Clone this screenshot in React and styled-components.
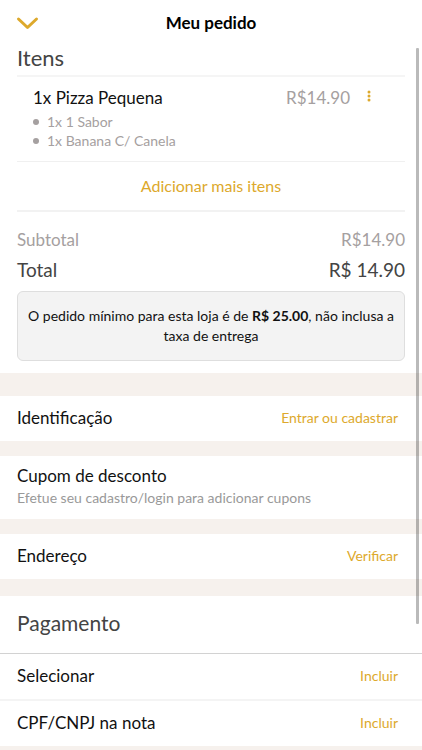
import styled, { createGlobalStyle } from "styled-components";

const GlobalStyle = createGlobalStyle`
  * {
    box-sizing: border-box;
  }

  body {
    margin: 0;
    background-color: #f6f1ed;
    font-family: Lato, "Open Sans", sans-serif;
    color: #111;
  }

  h1, h2, h3, p, ul, dl, dd {
    margin: 0;
    padding: 0;
  }

  button {
    padding: 0;
    border: none;
    background: none;
    font-family: inherit;
    cursor: pointer;
  }
`;

const Page = styled.div`
  position: relative;
  display: flex;
  flex-direction: column;
  min-height: 100vh;
`;

const Header = styled.header`
  display: grid;
  grid-template-columns: 24px 1fr 24px;
  align-items: center;
  height: 46px;
  padding: 0 15px;
  background-color: #fff;
`;

const CloseButton = styled.button`
  display: flex;
  justify-content: center;
`;

const Title = styled.h1`
  font-size: 17px;
  line-height: 24px;
  font-weight: bold;
  color: #000;
  text-align: center;
`;

const Panel = styled.section`
  padding: ${(props) => props.$padding || "0 17px"};
  margin-bottom: ${(props) => props.$gap || "15px"};
  background-color: #fff;
`;

const Heading = styled.h2`
  font-size: 22px;
  line-height: 24px;
  font-weight: normal;
  color: #444;
`;

const Item = styled.article`
  display: grid;
  grid-template-columns: 1fr auto 55px;
  align-items: start;
  height: 87px;
  margin-top: 5px;
  padding: 9px 0 0 16px;
  border-top: 2px solid #f5f5f5;
  border-bottom: 1px solid #f0f0f0;
`;

const ItemName = styled.h3`
  font-size: 17px;
  line-height: 24px;
  font-weight: normal;
`;

const Options = styled.ul`
  list-style: none;
  margin-top: 2px;
  font-size: 14px;
  line-height: 19px;
  color: #a5a0a0;

  li {
    display: flex;
    align-items: center;
    gap: 8px;
  }

  li::before {
    content: "";
    width: 6px;
    height: 6px;
    border-radius: 50%;
    background-color: #a5a0a0;
  }
`;

const Price = styled.span`
  font-size: 17px;
  line-height: 24px;
  color: #a5a0a0;
`;

const MenuButton = styled.button`
  display: flex;
  align-items: center;
  height: 20px;
  padding: 0 17px;
`;

const AddMore = styled.button`
  display: block;
  width: 100%;
  height: 50px;
  border-bottom: 2px solid #f2f2f2;
  font-size: 16px;
  line-height: 24px;
  color: #dda92c;
`;

const Totals = styled.dl`
  padding: 13px 0 6px;
`;

const TotalRow = styled.div`
  display: flex;
  justify-content: space-between;
  font-size: ${(props) => (props.$strong ? "19px" : "17px")};
  line-height: 30px;
  color: ${(props) => (props.$strong ? "#444" : "#a5a0a0")};
`;

const Notice = styled.p`
  padding: 14px 2px;
  border: 1px solid #dedede;
  border-radius: 6px;
  background-color: #f3f3f3;
  font-size: 14px;
  line-height: 20px;
  text-align: center;
`;

const Row = styled.div`
  display: flex;
  justify-content: space-between;
  align-items: center;
  height: 45px;
  padding: 0 24px 2px 17px;
`;

const Label = styled.h3`
  font-size: 17px;
  line-height: 24px;
  font-weight: normal;
`;

const Action = styled.button`
  font-size: 14px;
  line-height: 24px;
  color: #dda92c;
`;

const Hint = styled.p`
  font-size: 14px;
  line-height: 20px;
  color: #999;
`;

const PaymentHeading = styled(Heading)`
  padding: 15px 17px 18px;
  border-bottom: 1px solid #d2d2d2;
  font-size: 21px;
`;

const PaymentRow = styled(Row)`
  & + & {
    height: 47px;
    border-top: 2px solid #f4f4f4;
  }
`;

const ScrollThumb = styled.div`
  position: absolute;
  top: 48px;
  right: 3px;
  width: 3px;
  height: 576px;
  border-radius: 1px;
  background-color: rgba(0, 0, 0, 0.27);
`;

const options = ["1x 1 Sabor", "1x Banana C/ Canela"];
const paymentRows = ["Selecionar", "CPF/CNPJ na nota"];

export default function App() {
  return (
    <Page>
      <GlobalStyle />
      <Header>
        <CloseButton aria-label="Fechar">
          <svg width="24" height="16" viewBox="0 0 24 16" fill="none">
            <path
              d="M3.5 4L12.5 12.5L21.5 4"
              stroke="#dda92c"
              strokeWidth="3"
              strokeLinecap="round"
              strokeLinejoin="round"
            />
          </svg>
        </CloseButton>
        <Title>Meu pedido</Title>
      </Header>
      <main>
        <Panel $padding="0 17px 12px" $gap="23px">
          <Heading>Itens</Heading>
          <Item>
            <div>
              <ItemName>1x Pizza Pequena</ItemName>
              <Options>
                {options.map((option) => (
                  <li key={option}>{option}</li>
                ))}
              </Options>
            </div>
            <Price>R$14.90</Price>
            <MenuButton aria-label="Opções do item">
              <svg width="4" height="12" viewBox="0 0 4 12" fill="#dda92c">
                <circle cx="2" cy="2" r="1.5" />
                <circle cx="2" cy="6" r="1.5" />
                <circle cx="2" cy="10" r="1.5" />
              </svg>
            </MenuButton>
          </Item>
          <AddMore>Adicionar mais itens</AddMore>
          <Totals>
            <TotalRow>
              <dt>Subtotal</dt>
              <dd>R$14.90</dd>
            </TotalRow>
            <TotalRow $strong>
              <dt>Total</dt>
              <dd>R$ 14.90</dd>
            </TotalRow>
          </Totals>
          <Notice>
            O pedido mínimo para esta loja é de <b>R$ 25.00</b>, não inclusa a
            taxa de entrega
          </Notice>
        </Panel>
        <Panel $padding="0">
          <Row>
            <Label>Identificação</Label>
            <Action>Entrar ou cadastrar</Action>
          </Row>
        </Panel>
        <Panel $padding="8px 17px 11px">
          <Label>Cupom de desconto</Label>
          <Hint>Efetue seu cadastro/login para adicionar cupons</Hint>
        </Panel>
        <Panel $padding="0" $gap="17px">
          <Row>
            <Label>Endereço</Label>
            <Action>Verificar</Action>
          </Row>
        </Panel>
        <Panel $padding="0" $gap="0">
          <PaymentHeading>Pagamento</PaymentHeading>
          {paymentRows.map((label) => (
            <PaymentRow key={label}>
              <Label>{label}</Label>
              <Action>Incluir</Action>
            </PaymentRow>
          ))}
        </Panel>
      </main>
      <ScrollThumb />
    </Page>
  );
}
